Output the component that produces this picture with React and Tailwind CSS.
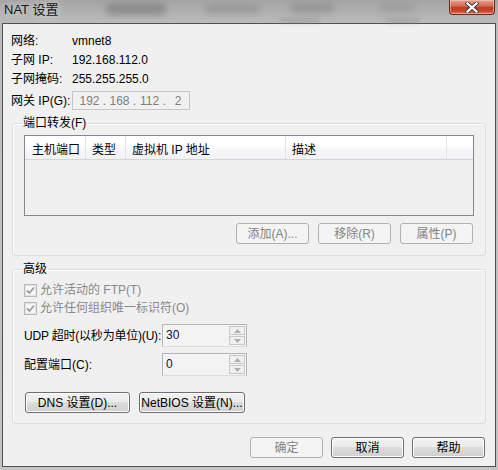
import React from 'react';

const btnOn =
  'h-[21px] rounded-[3px] border border-[#707070] bg-[linear-gradient(to_bottom,#f2f2f2_0%,#ebebeb_50%,#dddddd_50%,#cfcfcf_100%)] shadow-[inset_0_0_0_1px_#fbfbfb] text-black flex items-center justify-center whitespace-nowrap';
const btnOff =
  'h-[21px] rounded-[3px] border border-[#adb2b5] bg-[#f4f4f4] text-[#838383] flex items-center justify-center whitespace-nowrap';

const Check = ({ label }) => (
  <div className="h-[16px] flex items-center gap-[3px] text-[#8a8a8a]">
    <svg width="13" height="13" viewBox="0 0 13 13">
      <rect x="0.5" y="0.5" width="12" height="12" fill="#f4f4f4" stroke="#b9b9b9" />
      <rect x="1.5" y="1.5" width="10" height="10" fill="#f7f7f7" stroke="#e3e3e3" />
      <path d="M3 6.5 L5.5 9 L10 3.5" fill="none" stroke="#9d9d9d" strokeWidth="1.8" />
    </svg>
    <span>{label}</span>
  </div>
);

const Spin = ({ value }) => (
  <div className="shrink-0 w-[85px] h-[23px] border border-[#b5b5b5] border-b-[#dcdcdc] bg-[#f3f3f3] flex items-stretch">
    <div className="flex-1 pl-[3px] pt-[2px] text-[#10104a] leading-[16px]">{value}</div>
    <div className="w-[16px] flex flex-col gap-[1px] py-[1px] mr-[1px]">
      {[0, 1].map((i) => (
        <div key={i} className="flex-1 border border-[#c8c8c8] bg-[#f0f0f0] flex items-center justify-center">
          <svg width="7" height="4" viewBox="0 0 7 4">
            <path d={i === 0 ? 'M0 4 L3.5 0 L7 4 Z' : 'M0 0 L3.5 4 L7 0 Z'} fill="#b0b0b0" />
          </svg>
        </div>
      ))}
    </div>
  </div>
);

export default function App() {
  return (
    <div className="w-[498px] h-[470px] flex flex-col overflow-hidden bg-[linear-gradient(to_bottom,#a4a4a4,#bdbdbd_25px,#c4c4c4)] font-['Liberation_Sans','Noto_Sans_CJK_SC',sans-serif] text-[12px] text-black">
      {/* title bar */}
      <div className="relative h-[23px] shrink-0 flex items-start">
        <div className="absolute left-[105px] top-[3px] w-[62px] h-[12px] bg-[#6f6f6f] opacity-50 blur-[3px] rounded-full" />
        <div className="absolute left-[205px] top-[5px] w-[55px] h-[8px] bg-[#7a7a7a] opacity-40 blur-[3px] rounded-full" />
        <div className="absolute left-[290px] top-[3px] w-[45px] h-[10px] bg-[#7a7a7a] opacity-40 blur-[3px] rounded-full" />
        <div className="absolute left-[380px] top-[4px] w-[35px] h-[8px] bg-[#888] opacity-40 blur-[3px] rounded-full" />
        <div className="absolute left-[280px] top-[18px] w-[40px] h-[5px] bg-[#888] opacity-40 blur-[2px] rounded-full" />
        <div className="absolute left-[385px] top-[18px] w-[35px] h-[5px] bg-[#888] opacity-40 blur-[2px] rounded-full" />
        <div className="relative pl-[4px] pt-[1px] text-[13px] leading-[18px] text-[#161616] [text-shadow:0_0_8px_rgba(255,255,255,0.9)]">
          NAT 设置
        </div>
        <div className="relative ml-auto mr-[3px] w-[46px] h-[15px] rounded-b-[4px] border border-t-0 border-[#6b2d22] bg-[linear-gradient(to_bottom,#e6a08f_0%,#d4715a_40%,#c0381f_55%,#cc4a30_80%,#e07a5e_100%)] shadow-[inset_0_0_0_1px_rgba(255,220,210,0.45)] flex items-center justify-center">
          <svg width="14" height="11" viewBox="0 0 14 11">
            <path d="M2.5 1.5 L11.5 9.5 M11.5 1.5 L2.5 9.5" stroke="#3d3d4d" strokeWidth="4" strokeLinecap="square" />
            <path d="M2.5 1.5 L11.5 9.5 M11.5 1.5 L2.5 9.5" stroke="#ffffff" strokeWidth="2.2" strokeLinecap="square" />
          </svg>
        </div>
      </div>

      {/* client area */}
      <div className="mx-[2px] h-[444px] shrink-0 border border-[#4f4f4f] bg-[#f0f0f0] flex flex-col">
        <div className="pl-[8px] pt-[8px] flex flex-col gap-[1px]">
          <div className="h-[18px] flex items-center">
            <span className="w-[61px]">网络:</span>
            <span>vmnet8</span>
          </div>
          <div className="h-[18px] flex items-center">
            <span className="w-[61px]">子网 IP:</span>
            <span>192.168.112.0</span>
          </div>
          <div className="h-[18px] flex items-center">
            <span className="w-[61px]">子网掩码:</span>
            <span>255.255.255.0</span>
          </div>
        </div>
        <div className="pl-[8px] mt-[3px] h-[19px] flex items-center">
          <span className="w-[61px] shrink-0 whitespace-nowrap">网关 IP(G):</span>
          <div className="w-[118px] h-[19px] border border-[#c6c6c6] bg-[#f1f1f1] flex items-center pl-[6px] text-[#7d7d7d]">
            <span className="w-[21px] text-center">192</span>
            <span className="w-[9px] text-center">.</span>
            <span className="w-[21px] text-center">168</span>
            <span className="w-[9px] text-center">.</span>
            <span className="w-[21px] text-center">112</span>
            <span className="w-[9px] text-center">.</span>
            <span className="w-[18px] text-center">2</span>
          </div>
        </div>

        <fieldset className="mx-[9px] mt-[5px] border border-[#d5dfe5] rounded-[3px] shadow-[inset_1px_1px_0_#ffffff] pl-[11px] pr-[11px] pb-[11px]">
          <legend className="ml-[-2px] px-[1px] leading-[16px]">端口转发(F)</legend>
          <div className="mt-[4px] h-[81px] border border-[#828790] bg-[#f0f0f0]">
            <div className="h-[24px] flex border-b border-[#d5d5d5] bg-[linear-gradient(to_bottom,#ffffff_0%,#ffffff_45%,#f7f8fa_55%,#f1f2f4_100%)]">
              <div className="w-[61px] pl-[7px] pt-[5px] border-r border-[#e2e4e7]">主机端口</div>
              <div className="w-[40px] pl-[6px] pt-[5px] border-r border-[#e2e4e7]">类型</div>
              <div className="w-[160px] pl-[6px] pt-[5px] border-r border-[#e2e4e7]">虚拟机 IP 地址</div>
              <div className="w-[161px] pl-[6px] pt-[5px] border-r border-[#e2e4e7]">描述</div>
              <div className="flex-1" />
            </div>
          </div>
          <div className="mt-[7px] flex justify-end gap-[9px] pr-[1px]">
            <div className={`${btnOff} w-[73px]`}>添加(A)...</div>
            <div className={`${btnOff} w-[73px]`}>移除(R)</div>
            <div className={`${btnOff} w-[73px]`}>属性(P)</div>
          </div>
        </fieldset>

        <fieldset className="mx-[9px] mt-[5px] border border-[#d5dfe5] rounded-[3px] shadow-[inset_1px_1px_0_#ffffff] pl-[11px] pb-[10px]">
          <legend className="ml-[-2px] px-[1px] leading-[16px]">高级</legend>
          <div className="mt-[5px] flex flex-col gap-[2px]">
            <Check label="允许活动的 FTP(T)" />
            <Check label="允许任何组织唯一标识符(O)" />
          </div>
          <div className="mt-[8px] flex items-center">
            <span className="w-[138px] shrink-0 whitespace-nowrap tracking-[-0.2px]">UDP 超时(以秒为单位)(U):</span>
            <Spin value="30" />
          </div>
          <div className="mt-[6px] flex items-center">
            <span className="w-[138px] shrink-0 whitespace-nowrap">配置端口(C):</span>
            <Spin value="0" />
          </div>
          <div className="mt-[16px] pl-[1px] flex gap-[9px]">
            <div className={`${btnOn} w-[105px]`}>DNS 设置(D)...</div>
            <div className={`${btnOn} w-[106px]`}>NetBIOS 设置(N)...</div>
          </div>
        </fieldset>

        <div className="mt-[13px] pr-[10px] flex justify-end gap-[8px]">
          <div className={`${btnOff} w-[73px]`}>确定</div>
          <div className={`${btnOn} w-[73px]`}>取消</div>
          <div className={`${btnOn} w-[73px]`}>帮助</div>
        </div>
      </div>
    </div>
  );
}
